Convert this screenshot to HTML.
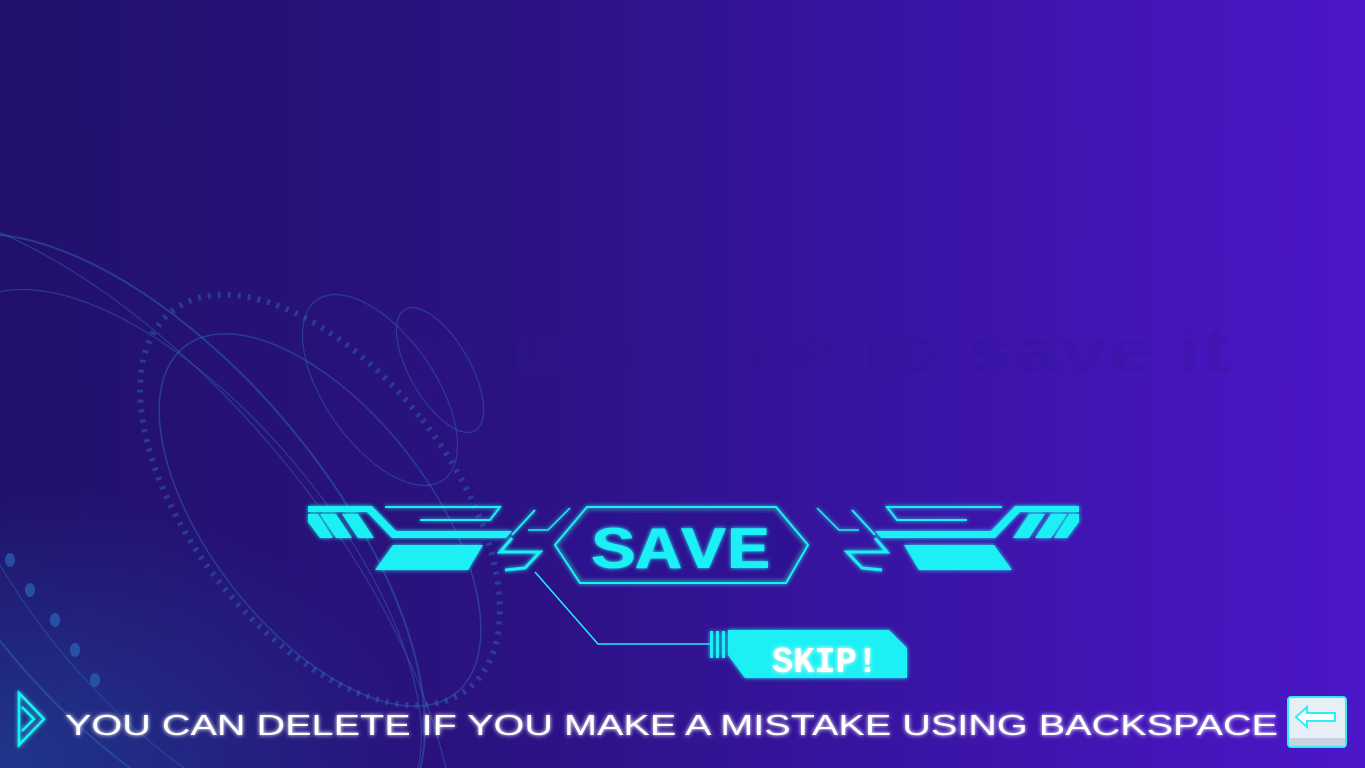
<!DOCTYPE html>
<html><head><meta charset="utf-8"><style>
html,body{margin:0;padding:0;width:1365px;height:768px;overflow:hidden}
body{background:linear-gradient(90deg,#21116a 0%,#2a1280 35%,#3b14a8 70%,#4c16c8 100%);position:relative;font-family:"Liberation Sans",sans-serif}
svg{position:absolute;left:0;top:0;display:block}
</style></head><body>
<svg width="1365" height="768" viewBox="0 0 1365 768">
<defs>
<radialGradient id="bl" cx="0" cy="1" r="0.6">
<stop offset="0" stop-color="#1f4fa0" stop-opacity="0.6"/>
<stop offset="1" stop-color="#1f4fa0" stop-opacity="0"/>
</radialGradient>
<filter id="glow" x="-20%" y="-40%" width="140%" height="180%"><feGaussianBlur stdDeviation="2" result="b"/><feMerge><feMergeNode in="b"/><feMergeNode in="SourceGraphic"/></feMerge></filter>
</defs>
<rect x="0" y="300" width="700" height="468" fill="url(#bl)"/>
<text x="410" y="372" font-family="Liberation Sans" font-weight="bold" font-size="62" fill="#2e1790" opacity="0.2" textLength="820" lengthAdjust="spacingAndGlyphs">your name to save it</text>
<g fill="none" stroke="#2d5fae" stroke-opacity="0.55" stroke-width="2">
<ellipse cx="150" cy="540" rx="180" ry="370" transform="rotate(-40 150 540)"/>
<ellipse cx="180" cy="560" rx="150" ry="330" transform="rotate(-40 180 560)" stroke-width="1.2"/>
<ellipse cx="320" cy="520" rx="110" ry="220" transform="rotate(-38 320 520)" stroke-width="1.5"/>
<ellipse cx="320" cy="500" rx="130" ry="240" transform="rotate(-38 320 500)" stroke-width="6" stroke-dasharray="3 7"/>
<ellipse cx="380" cy="390" rx="55" ry="110" transform="rotate(-35 380 390)" stroke-width="1.2"/>
<ellipse cx="440" cy="370" rx="30" ry="70" transform="rotate(-30 440 370)" stroke-width="1.2"/>
<ellipse cx="100" cy="600" rx="230" ry="480" transform="rotate(-40 100 600)" stroke-width="1.2"/>
</g>
<g fill="#2a6fbf" opacity="0.6">
<ellipse cx="10" cy="560" rx="5" ry="7"/><ellipse cx="30" cy="590" rx="5" ry="7"/><ellipse cx="55" cy="620" rx="5" ry="7"/><ellipse cx="75" cy="650" rx="5" ry="7"/><ellipse cx="95" cy="680" rx="5" ry="7"/>
</g>
<g id="half" fill="#1ff0f4" filter="url(#glow)">
<polygon points="308,506 372,506 396,531 512,531 506,538 392,538 367,512 308,512"/>
<polygon points="308,514 318,514 333,538 320,538 308,522"/>
<polygon points="320,514 336,514 352,538 336,538"/>
<polygon points="342,514 358,514 374,538 358,538"/>
<polygon points="393,545 483,545 468,570 375,570"/>
<polyline points="385,507 500,507 490,520 420,520" fill="none" stroke="#1ff0f4" stroke-width="2"/>
<polyline points="535,510 512,535" fill="none" stroke="#1ff0f4" stroke-width="2"/>
<polyline points="512,538 500,552 540,552 525,568 505,570" fill="none" stroke="#1ff0f4" stroke-width="3"/>
<polyline points="570,508 548,530 528,530" fill="none" stroke="#1ff0f4" stroke-width="1.5"/>
</g>
<use href="#half" transform="translate(1387 0) scale(-1 1)"/>
<polygon points="587,507 776,507 808,545 786,583 580,583 555,545" fill="#2a1590" fill-opacity="0.4" stroke="#1ff0f4" stroke-width="2" filter="url(#glow)"/>
<text x="591" y="568" font-family="Liberation Mono" font-weight="bold" font-size="60" fill="#1ff0f4" textLength="180" lengthAdjust="spacingAndGlyphs" filter="url(#glow)">SAVE</text>
<polyline points="535,572 598,644 710,644" fill="none" stroke="#1ff0f4" stroke-width="1.5"/>
<g fill="#1ff0f4" filter="url(#glow)">
<rect x="710" y="631" width="3" height="27"/><rect x="716" y="631" width="3" height="27"/><rect x="722" y="631" width="3" height="27"/>
<polygon points="728,630 889,630 907,648 907,678 745,678 728,655"/>
</g>
<text x="772" y="672" font-family="Liberation Mono" font-weight="bold" font-size="36" fill="#ffffff" textLength="106" lengthAdjust="spacingAndGlyphs" filter="url(#glow)">SKIP!</text>
<g fill="none" stroke="#1ff0f4" stroke-width="2.5" filter="url(#glow)">
<polygon points="19,693 44,719 19,745"/>
<polyline points="22,707 34,719 22,731"/>
</g>
<text x="65" y="735" font-family="Liberation Sans" font-size="29" fill="#ffffff" textLength="1213" lengthAdjust="spacingAndGlyphs" filter="url(#glow)">YOU CAN DELETE IF YOU MAKE A MISTAKE USING BACKSPACE</text>
<rect x="1288" y="697" width="58" height="50" rx="3" fill="#e8eef5" stroke="#2af0f6" stroke-width="2"/>
<rect x="1289" y="738" width="56" height="8" fill="#c9d2de"/>
<path d="M1296 717 L1307 707 L1307 713 L1335 713 L1335 721 L1307 721 L1307 727 Z" fill="#ffffff" stroke="#2af0f6" stroke-width="2"/>
</svg>
</body></html>
